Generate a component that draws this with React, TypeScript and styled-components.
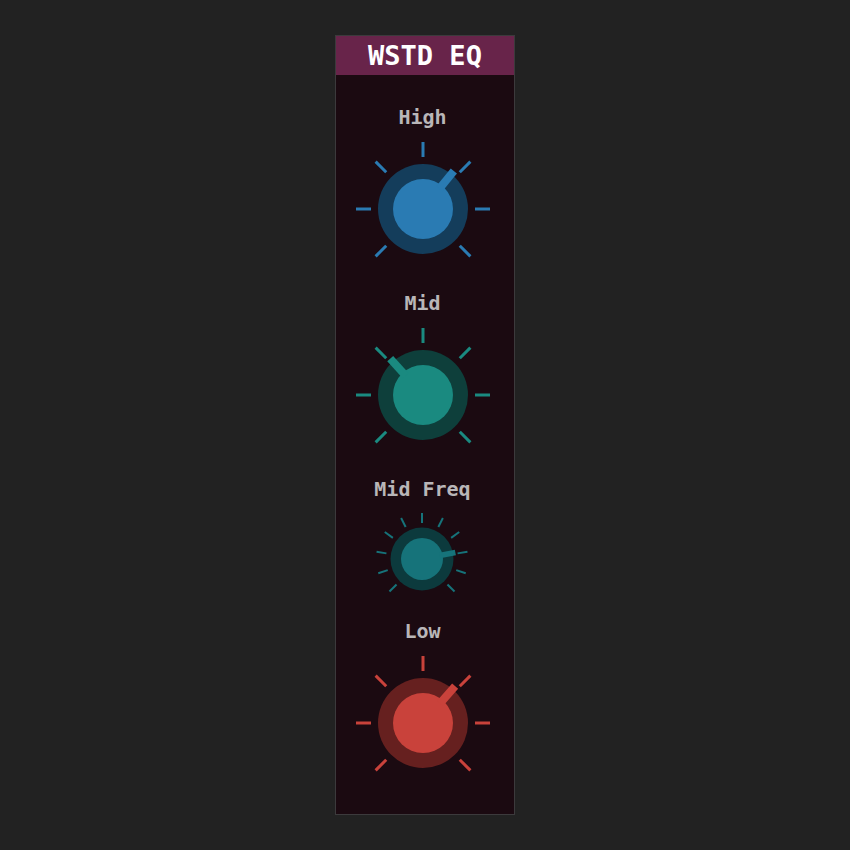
import React from 'react'
import styled, { createGlobalStyle } from 'styled-components'

const GlobalStyle = createGlobalStyle`
  html, body {
    margin: 0;
    padding: 0;
    background: #222222;
  }
`

const Page = styled.div`
  min-height: 850px;
  display: flex;
  justify-content: center;
  align-items: flex-start;
  padding-top: 35px;
  box-sizing: border-box;
  font-family: "DejaVu Sans Mono", "Liberation Mono", monospace;
`

const Panel = styled.div`
  width: 180px;
  height: 780px;
  box-sizing: border-box;
  border: 1px solid #3c3a3c;
  background: #1b0a11;
  display: flex;
  flex-direction: column;
`

const Header = styled.div`
  height: 39px;
  background: #68244a;
  color: #ffffff;
  font-weight: bold;
  font-size: 27px;
  display: flex;
  align-items: center;
  justify-content: center;
`

const Body = styled.div`
  display: flex;
  flex-direction: column;
  align-items: center;
  gap: 12px;
  padding: 30px 5px 0 0;
`

const Section = styled.div`
  display: flex;
  flex-direction: column;
  align-items: center;
  gap: 10px;
`

const Label = styled.div`
  height: 24px;
  line-height: 24px;
  font-size: 20px;
  font-weight: bold;
  color: #b9b6b8;
`

type KnobProps = {
  size: number
  outer: number
  inner: number
  ticks: number[]
  tickFrom: number
  tickTo: number
  tickWidth: number
  angle: number
  pointerFrom: number
  pointerTo: number
  pointerWidth: number
  accent: string
  ring: string
}

const polar = (c: number, r: number, deg: number) => {
  const a = (deg * Math.PI) / 180
  return [c + r * Math.sin(a), c - r * Math.cos(a)]
}

function Knob(p: KnobProps) {
  const c = p.size / 2
  const [px1, py1] = polar(c, p.pointerFrom, p.angle)
  const [px2, py2] = polar(c, p.pointerTo, p.angle)
  return (
    <svg width={p.size} height={p.size} viewBox={`0 0 ${p.size} ${p.size}`}>
      {p.ticks.map((t) => {
        const [x1, y1] = polar(c, p.tickFrom, t)
        const [x2, y2] = polar(c, p.tickTo, t)
        return <line key={t} x1={x1} y1={y1} x2={x2} y2={y2} stroke={p.accent} strokeWidth={p.tickWidth} />
      })}
      <circle cx={c} cy={c} r={p.outer} fill={p.ring} />
      <circle cx={c} cy={c} r={p.inner} fill={p.accent} />
      <line x1={px1} y1={py1} x2={px2} y2={py2} stroke={p.accent} strokeWidth={p.pointerWidth} />
    </svg>
  )
}

// ticks sweep from -135° to +135°, no tick at the bottom
const bigTicks = Array.from({ length: 7 }, (_, i) => -135 + i * 45)
const smallTicks = Array.from({ length: 11 }, (_, i) => -135 + i * 27)

function BigKnob({ accent, ring, angle }: { accent: string; ring: string; angle: number }) {
  return (
    <Knob
      size={140}
      outer={45}
      inner={30}
      ticks={bigTicks}
      tickFrom={52}
      tickTo={67}
      tickWidth={3}
      angle={angle}
      pointerFrom={26}
      pointerTo={49}
      pointerWidth={8}
      accent={accent}
      ring={ring}
    />
  )
}

export default function App() {
  return (
    <>
      <GlobalStyle />
      <Page>
        <Panel>
          <Header>WSTD EQ</Header>
          <Body>
            <Section>
              <Label>High</Label>
              <BigKnob accent="#2a7bb3" ring="#143d5b" angle={39} />
            </Section>
            <Section>
              <Label>Mid</Label>
              <BigKnob accent="#1a8a80" ring="#0e3f3b" angle={-42} />
            </Section>
            <Section>
              <Label>Mid Freq</Label>
              <Knob
                size={96}
                outer={31.5}
                inner={21}
                ticks={smallTicks}
                tickFrom={36}
                tickTo={46}
                tickWidth={2}
                angle={79}
                pointerFrom={18}
                pointerTo={34}
                pointerWidth={5.5}
                accent="#16737a"
                ring="#0c3a3d"
              />
            </Section>
            <Section>
              <Label>Low</Label>
              <BigKnob accent="#c9423b" ring="#66201f" angle={41} />
            </Section>
          </Body>
        </Panel>
      </Page>
    </>
  )
}
